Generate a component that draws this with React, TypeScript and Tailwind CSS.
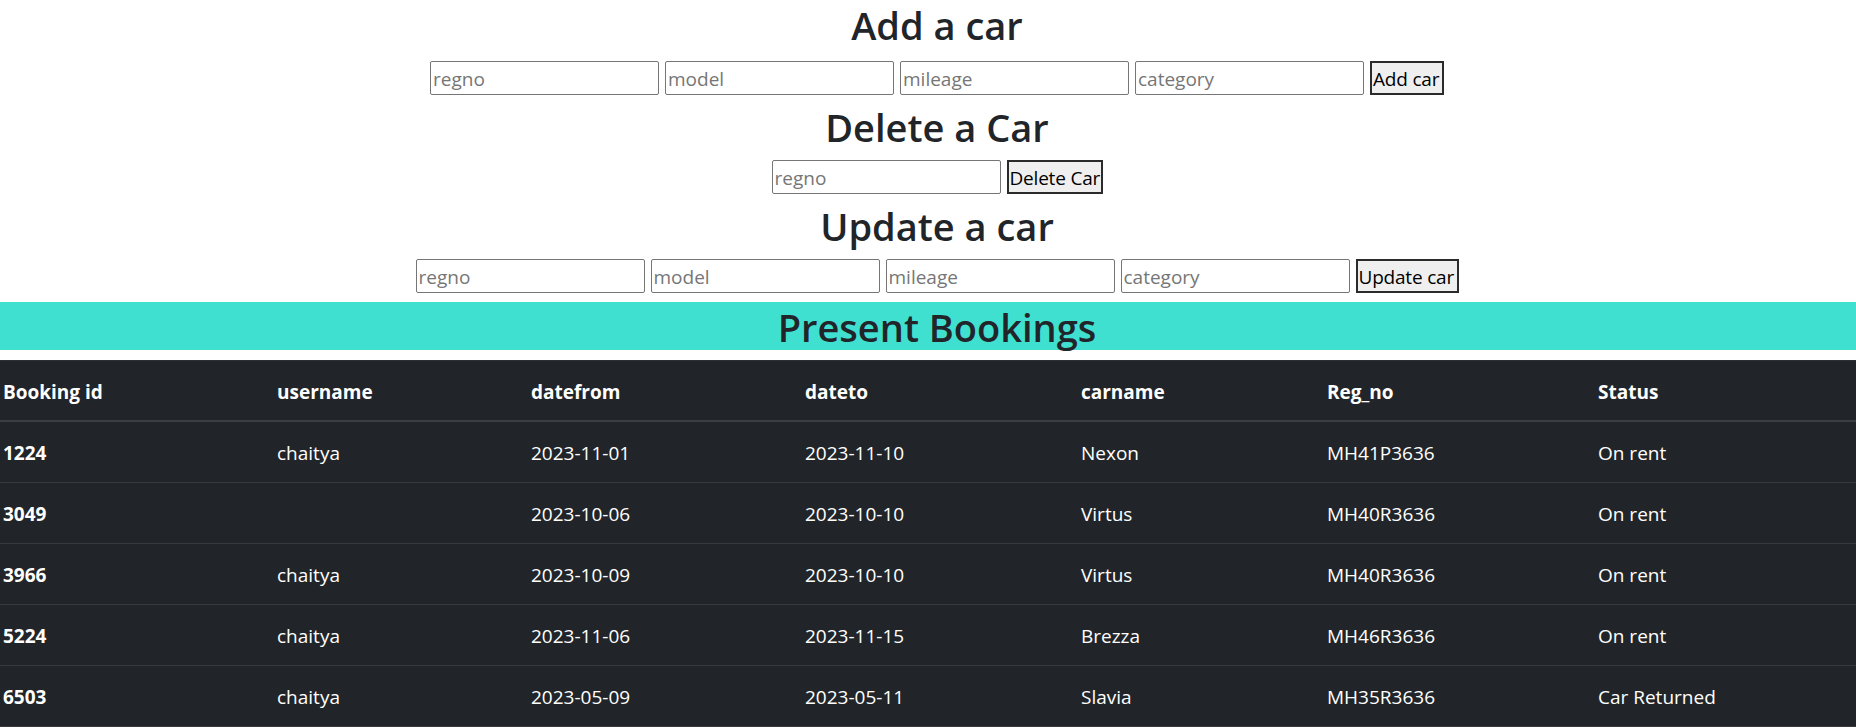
import React from "react";

const font = { fontFamily: '"Open Sans", "Noto Sans", Arial, sans-serif' };

function Field({ ph }: { ph: string }) {
  return (
    <input
      placeholder={ph}
      className="w-[229px] h-[34px] border border-[#767676] rounded-[2px] bg-white pl-[2px] pt-[2px] text-[19px] text-[#212529] placeholder:text-[#767676] outline-none"
      style={font}
    />
  );
}

function Btn({ label, w }: { label: string; w: string }) {
  return (
    <button
      className={`${w} h-[34px] border-2 border-[#2b2b2b] bg-[#efefef] text-[19px] text-black px-0 pt-[2px] text-left overflow-hidden whitespace-nowrap leading-none`}
      style={font}
    >
      <span className="pl-[1px] tracking-[-0.2px]">{label}</span>
    </button>
  );
}

function Heading({ children }: { children: React.ReactNode }) {
  return (
    <h2 className="h-[48px] pt-[3px] leading-[45px] mb-[10px] text-[38px] font-semibold text-[#212529] text-center pl-[18px]">
      {children}
    </h2>
  );
}

const rows = [
  ["1224", "chaitya", "2023-11-01", "2023-11-10", "Nexon", "MH41P3636", "On rent"],
  ["3049", "", "2023-10-06", "2023-10-10", "Virtus", "MH40R3636", "On rent"],
  ["3966", "chaitya", "2023-10-09", "2023-10-10", "Virtus", "MH40R3636", "On rent"],
  ["5224", "chaitya", "2023-11-06", "2023-11-15", "Brezza", "MH46R3636", "On rent"],
  ["6503", "chaitya", "2023-05-09", "2023-05-11", "Slavia", "MH35R3636", "Car Returned"],
];

const headers = ["Booking id", "username", "datefrom", "dateto", "carname", "Reg_no", "Status"];

const grid = "grid grid-cols-[274px_254px_274px_276px_246px_271px_1fr]";

export default function App() {
  return (
    <div className="w-[1856px] h-[728px] overflow-hidden bg-white" style={font}>
      <Heading>Add a car</Heading>
      <div className="h-[44px] pt-[3px] flex justify-center items-start gap-[6px] pl-[18px]">
        <Field ph="regno" />
        <Field ph="model" />
        <Field ph="mileage" />
        <Field ph="category" />
        <Btn label="Add car" w="w-[74px]" />
      </div>
      <Heading>Delete a Car</Heading>
      <div className="h-[41px] pt-[0px] flex justify-center items-start gap-[6px] pl-[18px]">
        <Field ph="regno" />
        <Btn label="Delete Car" w="w-[96px]" />
      </div>
      <Heading>Update a car</Heading>
      <div className="h-[43px] pt-[0px] flex justify-center items-start gap-[6px] pl-[18px]">
        <Field ph="regno" />
        <Field ph="model" />
        <Field ph="mileage" />
        <Field ph="category" />
        <Btn label="Update car" w="w-[103px]" />
      </div>
      <h2 className="h-[48px] pt-[3px] leading-[45px] mb-[10px] text-[38px] font-semibold text-[#212529] text-center pl-[18px] bg-[#40e0d0]">
        Present Bookings
      </h2>
      <div className="bg-[#212529] text-white text-[19px]">
        <div className={`${grid} h-[62px] pt-[4px] border-b-2 border-[#3b3f44] border-t border-t-[#2c3034]`}>
          {headers.map((h) => (
            <div key={h} className="pl-[3px] flex items-center font-bold">
              {h}
            </div>
          ))}
        </div>
        {rows.map((r) => (
          <div key={r[0]} className={`${grid} h-[61px] pt-[3px] border-b border-[#373b3e]`}>
            {r.map((c, i) => (
              <div key={i} className={`pl-[3px] flex items-center ${i === 0 ? "font-bold" : ""}`}>
                {c}
              </div>
            ))}
          </div>
        ))}
      </div>
    </div>
  );
}
